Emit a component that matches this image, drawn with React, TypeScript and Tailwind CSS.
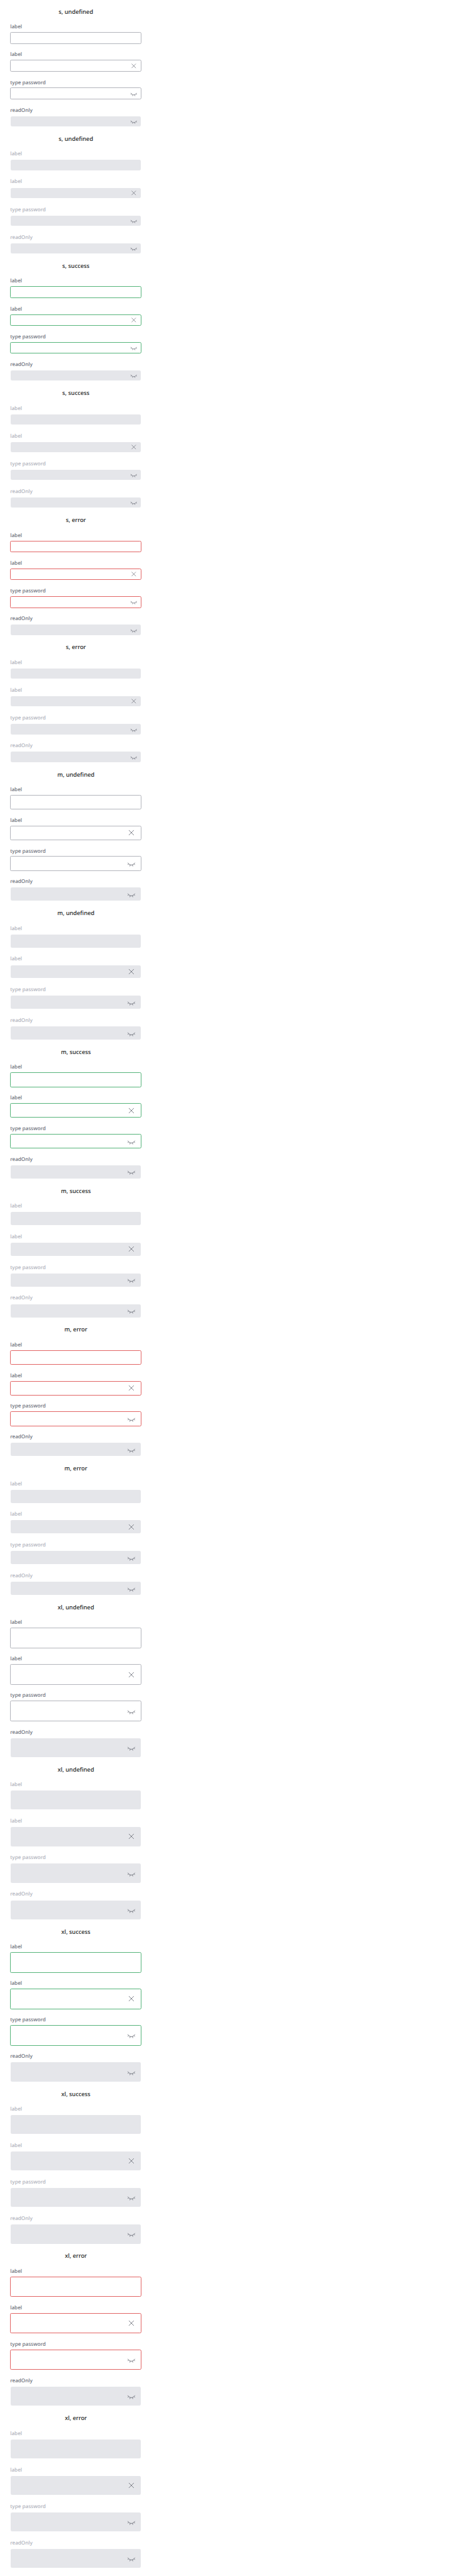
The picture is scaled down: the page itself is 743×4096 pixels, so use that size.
import React from "react";

type Size = "s" | "m" | "xl";
type Status = "undefined" | "success" | "error";
type IconName = "clear" | "eye";

const sizes: Size[] = ["s", "m", "xl"];
const statuses: Status[] = ["undefined", "success", "error"];

const fields: { label: string; icon?: IconName; readOnly?: boolean }[] = [
  { label: "label" },
  { label: "label", icon: "clear" },
  { label: "type password", icon: "eye" },
  { label: "readOnly", icon: "eye", readOnly: true },
];

const sectionHeight: Record<Size, string> = {
  s: "h-[202.13px]",
  m: "h-[220.72px]",
  xl: "h-[257.892px]",
};

const boxHeight: Record<Size, string> = {
  s: "h-[18.594px]",
  m: "h-[23.235px]",
  xl: "h-[32.532px]",
};

const innerPadding: Record<Size, string> = {
  s: "pr-[5.81px]",
  m: "pr-[8.13px]",
  xl: "pr-[8.13px]",
};

const iconSize: Record<Size, string> = {
  s: "size-[11.61px]",
  m: "size-[13.93px]",
  xl: "size-[13.93px]",
};

const borderColor: Record<Status, string> = {
  undefined: "border-[#b3b5bc]",
  success: "border-[#55b47a]",
  error: "border-[#e26464]",
};

function Icon({ name, size }: { name: IconName; size: Size }) {
  return (
    <svg
      viewBox="0 0 24 24"
      fill="none"
      stroke="#6f727c"
      strokeWidth="1.5"
      strokeLinecap="round"
      className={`shrink-0 ${iconSize[size]}`}
    >
      {name === "clear" ? (
        <path d="M5.6 5.6l12.8 12.8M18.4 5.6L5.6 18.4" />
      ) : (
        <path d="M2.5 10.6C5 14.2 8.200 16.200 12 16.200s7-2 9.500-5.600M4.800 13.200l-2.300 1.800M9 16l-.9 3.200M15 16l.9 3.200M19.200 13.200l2.300 1.800" />
      )}
    </svg>
  );
}

function Field({
  label,
  icon,
  size,
  status,
  disabled,
  readOnly,
}: {
  label: string;
  icon?: IconName;
  size: Size;
  status: Status;
  disabled: boolean;
  readOnly?: boolean;
}) {
  const filled = disabled || readOnly;
  return (
    <div className="flex flex-col gap-[2.329px] py-[5.813px]">
      <div
        className={`h-[11.61px] text-[8.13px] leading-[11.61px] font-medium whitespace-nowrap ${
          disabled ? "text-[#b0b2bb]" : "text-[#6c6f79]"
        }`}
      >
        {label}
      </div>
      <div
        className={`${boxHeight[size]} ${
          filled ? "p-[1.16px]" : `rounded-[2.32px] border bg-white ${borderColor[status]}`
        }`}
      >
        <div
          className={`flex h-full items-center justify-end ${innerPadding[size]} ${
            filled ? "rounded-[2.32px] bg-[#e5e6ea]" : ""
          }`}
        >
          {icon && <Icon name={icon} size={size} />}
        </div>
      </div>
    </div>
  );
}

export default function App() {
  return (
    <main className="h-[4096px] w-[743px] overflow-hidden bg-white pt-[5.813px] pl-[16.25px] font-['Noto_Sans',sans-serif] [text-rendering:geometricPrecision]">
      <div className="w-[208.97px]">
        {sizes.map((size) =>
          statuses.map((status) =>
            [false, true].map((disabled) => (
              <section key={`${size}-${status}-${disabled}`} className={sectionHeight[size]}>
                <h2 className="h-[25.563px] text-center text-[9.29px] leading-[25.563px] font-medium text-[#1d1f26]">
                  {size}, {status}
                </h2>
                {fields.map((field, i) => (
                  <Field key={i} {...field} size={size} status={status} disabled={disabled} />
                ))}
              </section>
            )),
          ),
        )}
      </div>
    </main>
  );
}
